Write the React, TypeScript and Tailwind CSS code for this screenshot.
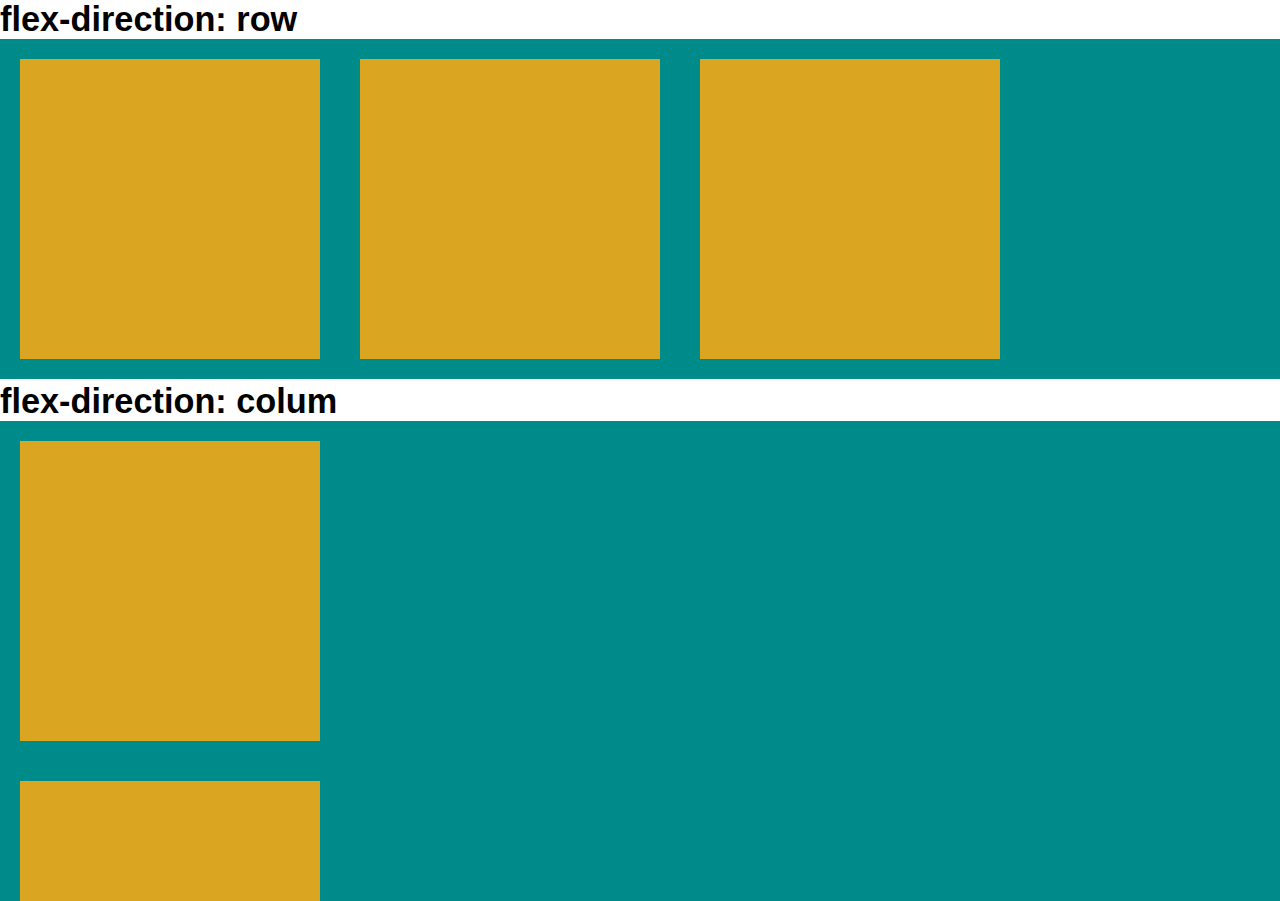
export default function App() {
  const boxes = [1, 2, 3];

  return (
    <div className="bg-white font-['Liberation_Sans',Arial,sans-serif] text-black">
      <h1 className="m-0 text-[34.3px] font-bold leading-[39px]">flex-direction: row</h1>
      <div className="flex flex-row bg-[#008b8b]">
        {boxes.map((b) => (
          <div key={b} className="m-5 h-[300px] w-[300px] bg-[#daa520]"></div>
        ))}
      </div>

      <h1 className="m-0 pt-[3px] text-[34.3px] font-bold leading-[39px]">flex-direction: colum</h1>
      <div className="flex flex-col bg-[#008b8b]">
        {boxes.map((b) => (
          <div key={b} className="m-5 h-[300px] w-[300px] bg-[#daa520]"></div>
        ))}
      </div>
    </div>
  );
}
